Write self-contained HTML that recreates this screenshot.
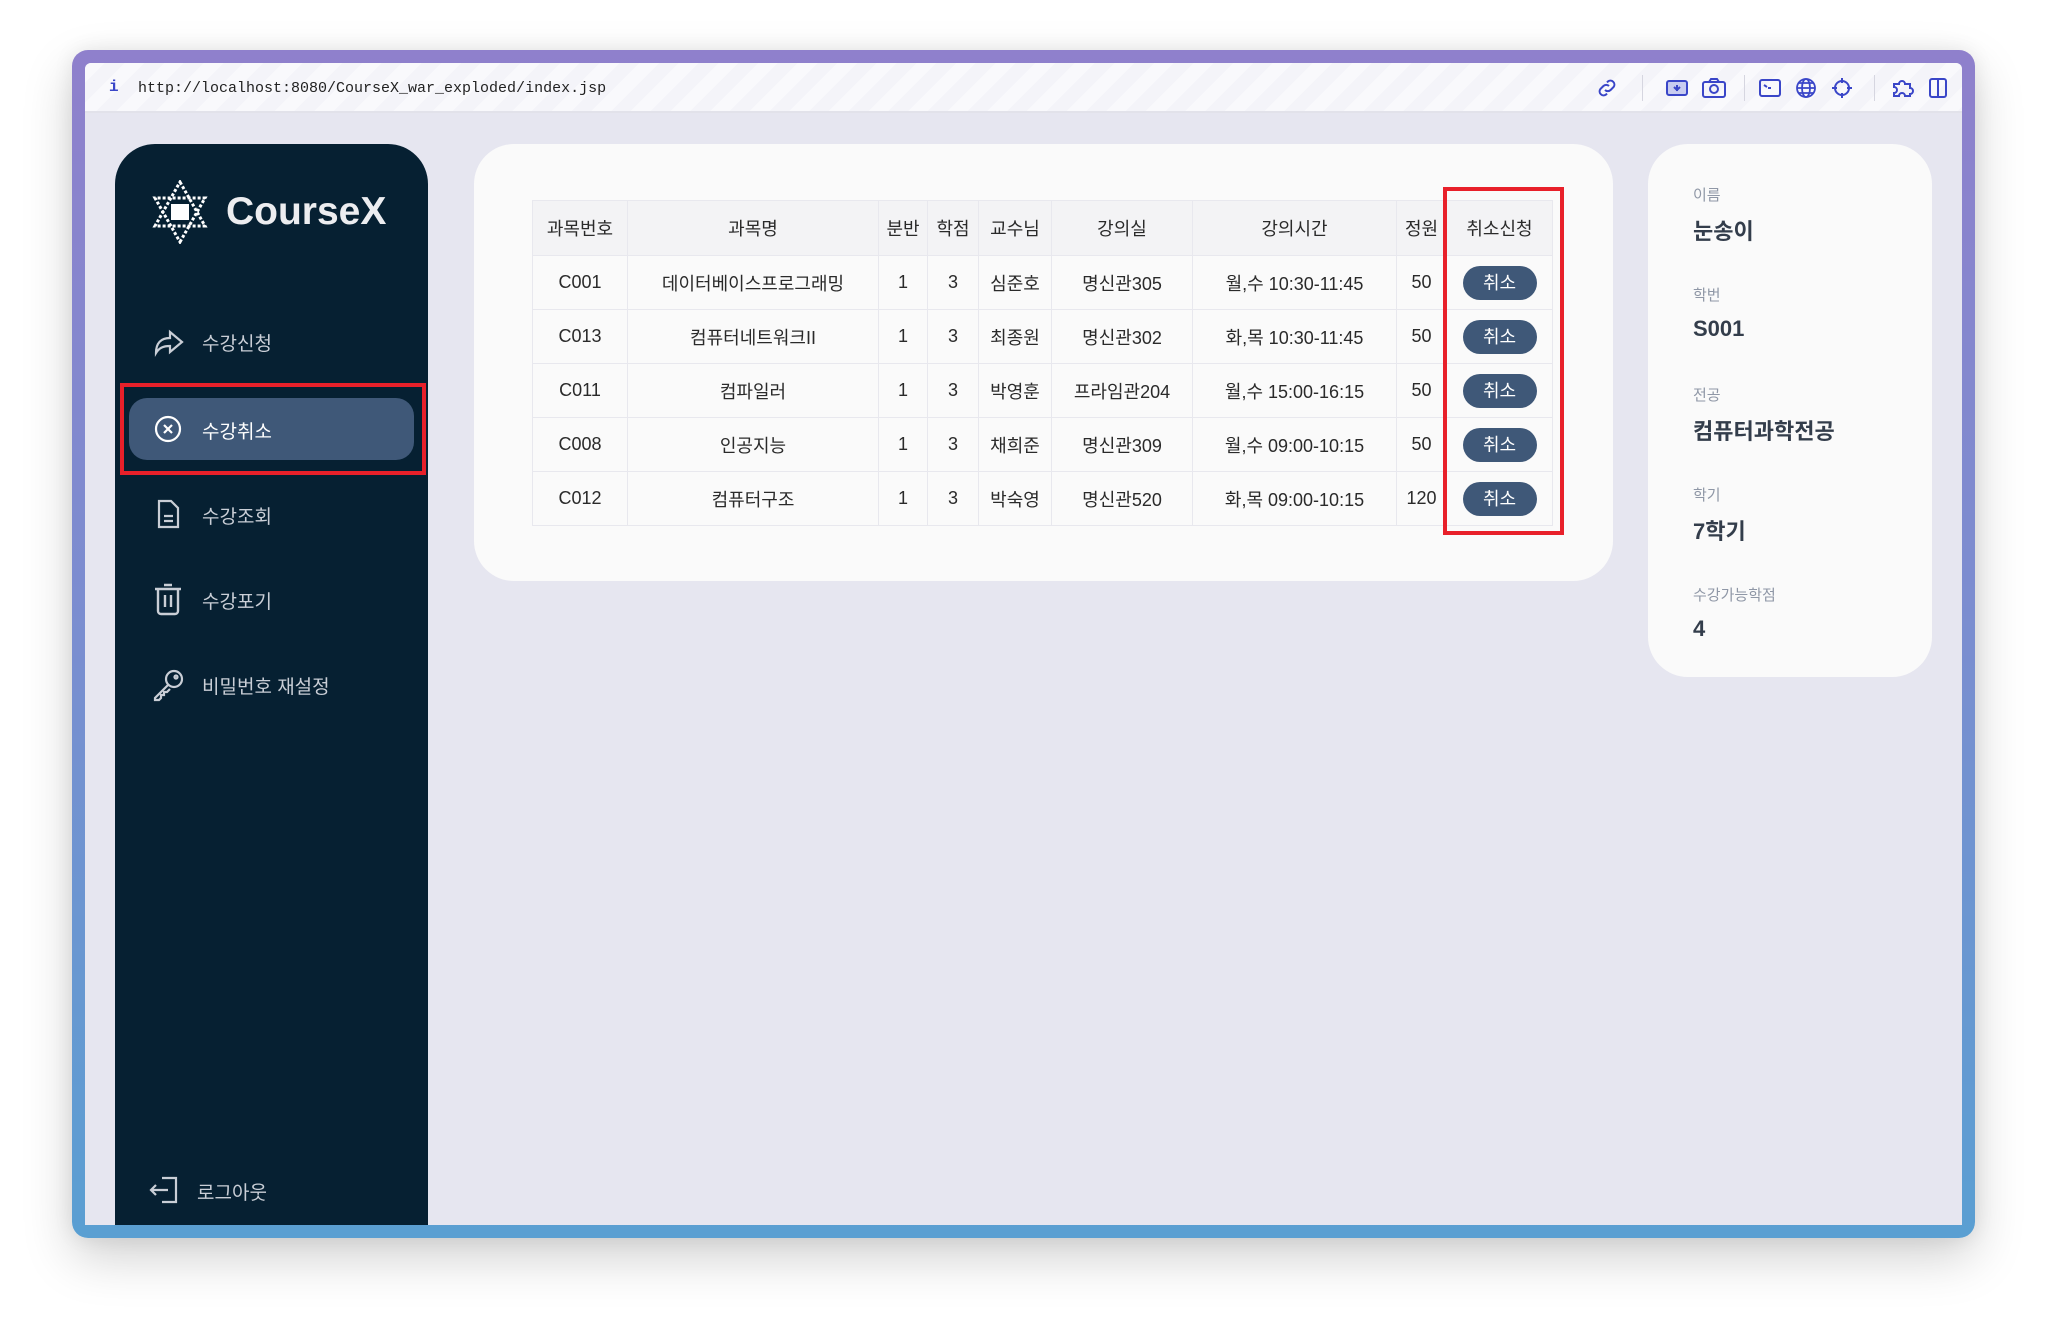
<!DOCTYPE html>
<html><head><meta charset="utf-8"><style>
*{box-sizing:border-box;margin:0;padding:0}
body{width:2048px;height:1335px;background:#fff;font-family:"Liberation Sans","Noto Sans CJK KR",sans-serif;position:relative;overflow:hidden}
.frame{position:absolute;left:72px;top:50px;width:1903px;height:1188px;border-radius:16px;background:linear-gradient(180deg,#8f80cc 0%,#7a8ed0 50%,#5a9fd2 100%);box-shadow:0 20px 50px rgba(0,0,0,.18),0 0 20px rgba(0,0,0,.08)}
.inner{position:absolute;left:13px;top:13px;right:13px;bottom:13px;background:#e6e6f0;overflow:hidden;border-radius:6px 6px 0 0}
.bar{position:absolute;left:0;top:0;right:0;height:50px;background:repeating-linear-gradient(135deg,#f9f9fc 0 14px,#f4f4f9 14px 28px);border-bottom:2px solid #e2e2ea}
.url{position:absolute;left:53px;top:17px;font-family:"Liberation Mono",monospace;font-size:15px;color:#222}
.ii{position:absolute;left:24px;top:15px;font-family:"Liberation Mono",monospace;font-size:16px;color:#3a46c8;font-weight:bold}
.ic{position:absolute;top:13px}
.dv{position:absolute;top:12px;width:1px;height:26px;background:#d6d6e0}
.side{position:absolute;left:30px;top:81px;width:313px;height:1200px;background:#062032;border-radius:40px 40px 0 0}
.logo{position:absolute;left:111px;top:46px;color:#ecedf0;font-size:39px;font-weight:bold}
.mi{position:absolute;left:0;width:313px;height:40px;color:#c9ced6;font-size:19px}
.mi span{position:absolute;left:87px;top:8px}
.mi svg{position:absolute;left:37px;top:4px}
.pill{position:absolute;left:14px;top:254px;width:285px;height:62px;background:#3f5878;border-radius:18px}
.red{position:absolute;border:4px solid #e8202a}
.card{position:absolute;left:389px;top:81px;width:1139px;height:437px;background:#fafafa;border-radius:40px}
table{position:absolute;left:58px;top:56px;border-collapse:collapse;font-size:18px;color:#2a2a2a}
td,th{border:1px solid #e8e8ee;text-align:center;height:54px;font-weight:normal}
th{background:#f3f3f5;height:55px}
.b{display:inline-block;width:74px;height:34px;line-height:34px;border-radius:17px;background:#3f5878;color:#fff;font-size:18px}
.rc{position:absolute;left:1563px;top:81px;width:284px;height:533px;background:#fafafa;border-radius:40px}
.lb{position:absolute;left:45px;font-size:15px;color:#8f97a6}
.vl{position:absolute;left:45px;font-size:22px;color:#333d4b;font-weight:bold}
</style></head><body>
<div class="frame"><div class="inner">
<div class="bar">
<span class="ii">i</span><span class="url">http://localhost:8080/CourseX_war_exploded/index.jsp</span>
<svg class="ic" style="left:1510px" width="24" height="24" viewBox="0 0 24 24" fill="none" stroke="#3a46c8" stroke-width="2"><path d="M10 14a4 4 0 0 0 5.6 0l3-3a4 4 0 0 0-5.6-5.6l-1 1M14 10a4 4 0 0 0-5.6 0l-3 3a4 4 0 0 0 5.6 5.6l1-1"/></svg>
<div class="dv" style="left:1557px"></div>
<svg class="ic" style="left:1580px" width="24" height="24" viewBox="0 0 24 24" fill="#c8ccf0" stroke="#3a46c8" stroke-width="2"><rect x="2" y="5" width="20" height="14" rx="2"/><path d="M12 9v6M9 11l3 3 3-3" fill="none"/></svg>
<svg class="ic" style="left:1616px" width="26" height="24" viewBox="0 0 26 24" fill="none" stroke="#3a46c8" stroke-width="2"><rect x="2" y="6" width="22" height="15" rx="2"/><path d="M8 6l2-3h6l2 3"/><circle cx="13" cy="13" r="4"/></svg>
<div class="dv" style="left:1659px"></div>
<svg class="ic" style="left:1673px" width="24" height="24" viewBox="0 0 24 24" fill="none" stroke="#3a46c8" stroke-width="2"><rect x="2" y="4" width="20" height="16" rx="2"/><path d="M6 9l3 2M10 12h3"/></svg>
<svg class="ic" style="left:1709px" width="24" height="24" viewBox="0 0 24 24" fill="none" stroke="#3a46c8" stroke-width="1.8"><circle cx="12" cy="12" r="9"/><ellipse cx="12" cy="12" rx="4" ry="9"/><path d="M3 12h18M5 7h14M5 17h14"/></svg>
<svg class="ic" style="left:1745px" width="24" height="24" viewBox="0 0 24 24" fill="none" stroke="#3a46c8" stroke-width="2"><circle cx="12" cy="12" r="7"/><path d="M12 2v5M12 17v5M2 12h5M17 12h5"/></svg>
<div class="dv" style="left:1789px"></div>
<svg class="ic" style="left:1805px" width="26" height="24" viewBox="0 0 26 24" fill="none" stroke="#3a46c8" stroke-width="2"><path d="M4 8h5a3 3 0 0 1 6 0h5v4a3 3 0 0 1 0 6v2h-5a3 3 0 0 0-6 0H4v-3a3 3 0 0 0 0-6z"/></svg>
<svg class="ic" style="left:1842px" width="22" height="24" viewBox="0 0 22 24" fill="none" stroke="#3a46c8" stroke-width="2"><rect x="3" y="3" width="16" height="18" rx="2"/><path d="M11 3v18"/></svg>
</div>
<div class="side">
<svg style="position:absolute;left:36px;top:36px" width="58" height="64" viewBox="0 0 58 64" fill="none" stroke="#fff" stroke-width="3" stroke-dasharray="3 2"><path d="M29 2L54 46H4Z"/><path d="M29 62L54 18H4Z"/><rect x="20" y="24" width="18" height="16" fill="#fff" stroke="none"/></svg>
<div class="logo">CourseX</div>
<div class="mi" style="top:177px"><svg width="34" height="32" viewBox="0 0 34 32" fill="none" stroke="#c9ced6" stroke-width="2.2"><path d="M4 28c0-10 5-15 14-15V7l12 10-12 10v-6c-7 0-11 2-14 7z"/></svg><span>수강신청</span></div>
<div class="pill"></div>
<div class="mi" style="top:265px;color:#fff"><svg width="32" height="32" viewBox="0 0 32 32" fill="none" stroke="#fff" stroke-width="2.2"><circle cx="16" cy="16" r="12"/><path d="M12 12l8 8M20 12l-8 8"/></svg><span>수강취소</span></div>
<div class="mi" style="top:350px"><svg width="32" height="32" viewBox="0 0 32 32" fill="none" stroke="#c9ced6" stroke-width="2.2"><path d="M7 3h12l7 7v19H7z"/><path d="M12 18h9M12 23h9"/></svg><span>수강조회</span></div>
<div class="mi" style="top:435px"><svg width="32" height="34" viewBox="0 0 32 34" fill="none" stroke="#c9ced6" stroke-width="2.4"><path d="M3 6h26M12 2h8M6 6v22a3 3 0 0 0 3 3h14a3 3 0 0 0 3-3V6M13 12v12M19 12v12"/></svg><span>수강포기</span></div>
<div class="mi" style="top:520px"><svg width="34" height="34" viewBox="0 0 34 34" fill="none" stroke="#c9ced6" stroke-width="2.2"><circle cx="22" cy="11" r="8"/><path d="M16 17L3 30v2h4l2-2v-3h3v-3h3l3-3"/><circle cx="24" cy="9" r="1.5"/></svg><span>비밀번호 재설정</span></div>
<div class="mi" style="top:1026px"><svg style="left:33px" width="32" height="32" viewBox="0 0 32 32" fill="none" stroke="#c9ced6" stroke-width="2.2"><path d="M14 4h14v24H14M3 16h17M8 11l-5 5 5 5"/></svg><span style="left:82px">로그아웃</span></div>
</div>
<div class="red" style="left:35px;top:320px;width:306px;height:92px"></div>
<div class="card">
<table>
<tr><th style="width:95px">과목번호</th><th style="width:251px">과목명</th><th style="width:49px">분반</th><th style="width:51px">학점</th><th style="width:73px">교수님</th><th style="width:141px">강의실</th><th style="width:204px">강의시간</th><th style="width:50px">정원</th><th style="width:106px">취소신청</th></tr>
<tr><td>C001</td><td>데이터베이스프로그래밍</td><td>1</td><td>3</td><td>심준호</td><td>명신관305</td><td>월,수 10:30-11:45</td><td>50</td><td><span class="b">취소</span></td></tr>
<tr><td>C013</td><td>컴퓨터네트워크II</td><td>1</td><td>3</td><td>최종원</td><td>명신관302</td><td>화,목 10:30-11:45</td><td>50</td><td><span class="b">취소</span></td></tr>
<tr><td>C011</td><td>컴파일러</td><td>1</td><td>3</td><td>박영훈</td><td>프라임관204</td><td>월,수 15:00-16:15</td><td>50</td><td><span class="b">취소</span></td></tr>
<tr><td>C008</td><td>인공지능</td><td>1</td><td>3</td><td>채희준</td><td>명신관309</td><td>월,수 09:00-10:15</td><td>50</td><td><span class="b">취소</span></td></tr>
<tr><td>C012</td><td>컴퓨터구조</td><td>1</td><td>3</td><td>박숙영</td><td>명신관520</td><td>화,목 09:00-10:15</td><td>120</td><td><span class="b">취소</span></td></tr>
</table>
</div>
<div class="red" style="left:1358px;top:124px;width:121px;height:348px"></div>
<div class="rc">
<div class="lb" style="top:40px">이름</div><div class="vl" style="top:70px">눈송이</div>
<div class="lb" style="top:140px">학번</div><div class="vl" style="top:172px">S001</div>
<div class="lb" style="top:240px">전공</div><div class="vl" style="top:270px">컴퓨터과학전공</div>
<div class="lb" style="top:340px">학기</div><div class="vl" style="top:370px">7학기</div>
<div class="lb" style="top:440px">수강가능학점</div><div class="vl" style="top:472px">4</div>
</div>
</div></div>
</body></html>
